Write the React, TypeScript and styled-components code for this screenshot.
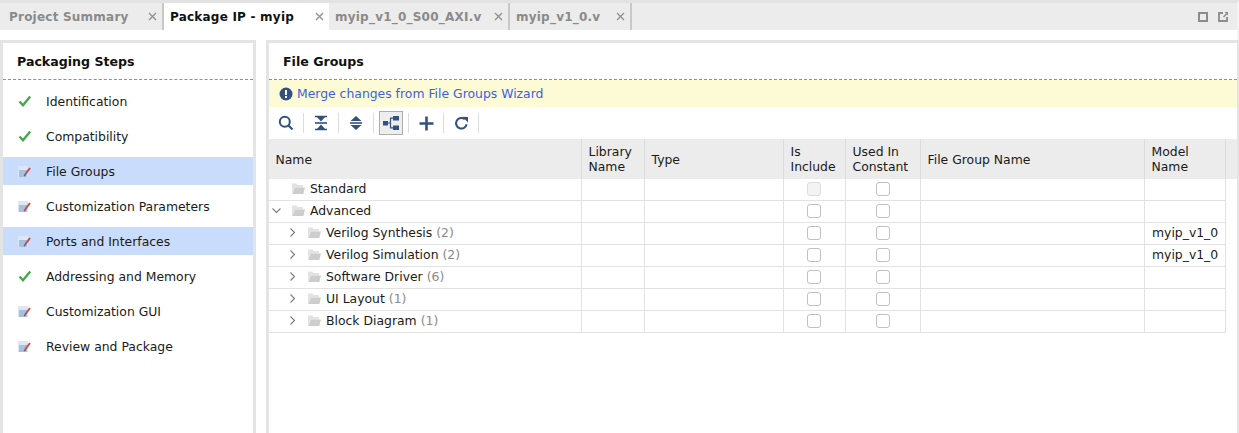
import React from "react";
import styled, { createGlobalStyle } from "styled-components";

const GlobalStyle = createGlobalStyle`
  html, body {
    margin: 0;
    padding: 0;
    background: #fff;
  }
  body {
    font-family: "DejaVu Sans", sans-serif;
    font-size: 12px;
    color: #1a1a1a;
  }
`;

const NAVY = "#33507f";

const tabs = [
  { label: "Project Summary", width: 164, left: 9 },
  { label: "Package IP - myip", width: 165, left: 6, active: true },
  { label: "myip_v1_0_S00_AXI.v", width: 181, left: 6 },
  { label: "myip_v1_0.v", width: 122, left: 6 },
];

const steps = [
  { label: "Identification", done: true },
  { label: "Compatibility", done: true },
  { label: "File Groups", selected: true },
  { label: "Customization Parameters" },
  { label: "Ports and Interfaces", selected: true },
  { label: "Addressing and Memory", done: true },
  { label: "Customization GUI" },
  { label: "Review and Package" },
];

const rows = [
  { name: "Standard", depth: 0, disabled: true },
  { name: "Advanced", depth: 0, open: true, arrow: true },
  { name: "Verilog Synthesis", count: 2, depth: 1, arrow: true, model: "myip_v1_0" },
  { name: "Verilog Simulation", count: 2, depth: 1, arrow: true, model: "myip_v1_0" },
  { name: "Software Driver", count: 6, depth: 1, arrow: true },
  { name: "UI Layout", count: 1, depth: 1, arrow: true },
  { name: "Block Diagram", count: 1, depth: 1, arrow: true },
];

const CloseIcon = () => (
  <svg width="9" height="9" viewBox="0 0 9 9">
    <path d="M1 1l7 7M8 1L1 8" stroke="#8f8f8f" strokeWidth="1.3" />
  </svg>
);

const CheckIcon = () => (
  <svg width="14" height="12" viewBox="0 0 14 12">
    <path d="M1.5 6.5L5 10.2L12.2 1.5" fill="none" stroke="#45a84d" strokeWidth="2.4" />
  </svg>
);

const EditIcon = () => (
  <svg width="13" height="11" viewBox="0 0 13 11">
    <rect x="0" y="0" width="10" height="11" fill="#dde6f3" />
    <rect x="1" y="4" width="8" height="7" fill="#a9bfe2" />
    <path d="M7.5 8L12 2" stroke="#cf4a42" strokeWidth="2" />
    <path d="M6.2 10.2L7.5 8" stroke="#6d5a55" strokeWidth="1.4" />
  </svg>
);

const FolderIcon = () => (
  <svg width="13" height="11" viewBox="0 0 13 11">
    <path d="M0 0.5h4.5l1 1.5H11v2.5H2.5L0 10.5z" fill="#e2e2e2" />
    <path d="M2.8 4.5H13l-1.6 6.5H0.2z" fill="#cdcdcd" />
  </svg>
);

const Chevron = ({ open }: { open?: boolean }) => (
  <svg width="9" height="9" viewBox="0 0 9 9">
    <path
      d={open ? "M0.5 2.5L4.5 6.5L8.5 2.5" : "M2.5 0.5L6.5 4.5L2.5 8.5"}
      fill="none"
      stroke="#7d7d7d"
      strokeWidth="1.1"
    />
  </svg>
);

const App = () => {
  return (
    <Page>
      <GlobalStyle />
      <TabBar>
        {tabs.map((t) => (
          <Tab key={t.label} $width={t.width} $left={t.left} $active={t.active}>
            <span>{t.label}</span>
            <CloseIcon />
          </Tab>
        ))}
        <WindowIcons>
          <svg width="10" height="10" viewBox="0 0 10 10">
            <rect x="1" y="1" width="8" height="8" fill="none" stroke="#8c8c8c" strokeWidth="2" />
          </svg>
          <svg width="10" height="10" viewBox="0 0 10 10">
            <path d="M5 1H1V9H9V5" fill="none" stroke="#8c8c8c" strokeWidth="1.8" />
            <path d="M5.5 5L9 1.5" fill="none" stroke="#8c8c8c" strokeWidth="1.4" />
            <path d="M6.5 0H10V3.5z" fill="#8c8c8c" />
          </svg>
        </WindowIcons>
      </TabBar>
      <Spacer />
      <Panels>
        <LeftPanel>
          <PanelHeader>Packaging Steps</PanelHeader>
          <StepList>
            {steps.map((s) => (
              <Step key={s.label} $selected={s.selected}>
                <StepIcon>{s.done ? <CheckIcon /> : <EditIcon />}</StepIcon>
                {s.label}
              </Step>
            ))}
          </StepList>
        </LeftPanel>
        <RightPanel>
          <PanelHeader>File Groups</PanelHeader>
          <Notice>
            <svg width="14" height="14" viewBox="0 0 14 14">
              <circle cx="7" cy="7" r="6.5" fill={NAVY} />
              <rect x="6" y="3" width="2" height="5" fill="#fff" />
              <rect x="6" y="9" width="2" height="2" fill="#fff" />
            </svg>
            <NoticeLink>Merge changes from File Groups Wizard</NoticeLink>
          </Notice>
          <Toolbar>
            <ToolButton>
              <svg width="16" height="16" viewBox="0 0 16 16">
                <circle cx="6.8" cy="6.8" r="5" fill="none" stroke={NAVY} strokeWidth="2" />
                <path d="M10.5 10.5L14.5 14.5" stroke={NAVY} strokeWidth="2.2" />
              </svg>
            </ToolButton>
            <ToolDivider />
            <ToolButton>
              <svg width="14" height="16" viewBox="0 0 14 16">
                <path d="M2 1h10L7 6.5z M2 15h10L7 9.5z" fill={NAVY} />
                <path d="M1 8h12" stroke={NAVY} strokeWidth="1.6" />
                <path d="M1 1.5h12M1 14.5h12" stroke={NAVY} strokeWidth="1.4" />
              </svg>
            </ToolButton>
            <ToolDivider />
            <ToolButton>
              <svg width="14" height="16" viewBox="0 0 14 16">
                <path d="M7 1L12.5 6H1.5z M7 15L1.5 10H12.5z" fill={NAVY} />
                <path d="M1 8h12" stroke={NAVY} strokeWidth="1.6" />
              </svg>
            </ToolButton>
            <ToolDivider />
            <ToolButton $pressed>
              <svg width="16" height="14" viewBox="0 0 16 14">
                <rect x="0" y="5" width="5" height="4.5" fill={NAVY} />
                <rect x="10" y="0" width="6" height="4.5" fill={NAVY} />
                <rect x="10" y="9.5" width="6" height="4.5" fill={NAVY} />
                <path d="M5 7h3M7.5 2.2V11.8M7 2.2h3M7 11.8h3" stroke={NAVY} strokeWidth="1.2" fill="none" />
              </svg>
            </ToolButton>
            <ToolDivider />
            <ToolButton>
              <svg width="15" height="15" viewBox="0 0 15 15">
                <path d="M7.5 0.5v14M0.5 7.5h14" stroke={NAVY} strokeWidth="2.6" />
              </svg>
            </ToolButton>
            <ToolDivider />
            <ToolButton>
              <svg width="15" height="15" viewBox="0 0 15 15">
                <path d="M12.6 8.2A5.3 5.3 0 1 1 10.8 3.2" fill="none" stroke={NAVY} strokeWidth="2" />
                <path d="M8.5 0.8L14 1V6.5z" fill={NAVY} />
              </svg>
            </ToolButton>
            <ToolDivider />
          </Toolbar>
          <Table>
            <HeaderRow>
              <HeadCell>Name</HeadCell>
              <HeadCell>Library<br />Name</HeadCell>
              <HeadCell>Type</HeadCell>
              <HeadCell>Is<br />Include</HeadCell>
              <HeadCell>Used In<br />Constant</HeadCell>
              <HeadCell>File Group Name</HeadCell>
              <HeadCell>Model<br />Name</HeadCell>
              <div />
            </HeaderRow>
            {rows.map((r) => (
              <BodyRow key={r.name}>
                <NameCell $depth={r.depth}>
                  <Arrow>{r.arrow && <Chevron open={r.open} />}</Arrow>
                  <FolderIcon />
                  <span>{r.name}</span>
                  {r.count !== undefined && <Count>({r.count})</Count>}
                </NameCell>
                <Cell />
                <Cell />
                <CheckCell $nudge><Box $disabled={r.disabled} /></CheckCell>
                <CheckCell><Box /></CheckCell>
                <Cell />
                <Cell>{r.model}</Cell>
              </BodyRow>
            ))}
          </Table>
        </RightPanel>
      </Panels>
    </Page>
  );
};

const Page = styled.div`
  width: 1239px;
  height: 433px;
  overflow: hidden;
  display: flex;
  flex-direction: column;
  background: #fff;
`;

const TabBar = styled.div`
  height: 27px;
  display: flex;
  align-items: stretch;
  background: #ececec;
  border-top: 3px solid #e2e2e2;
  border-right: 2px solid #f3f3f3;
`;

const Tab = styled.div<{ $width: number; $left: number; $active?: boolean }>`
  width: ${(p) => p.$width}px;
  box-sizing: border-box;
  padding: 0 5px 0 ${(p) => p.$left}px;
  display: flex;
  align-items: center;
  justify-content: space-between;
  font-size: 12px;
  letter-spacing: 0.22px;
  font-weight: bold;
  color: ${(p) => (p.$active ? "#111" : "#8a8a8a")};
  background: ${(p) => (p.$active ? "#fff" : "transparent")};
  border-right: ${(p) => (p.$active ? "0" : "2px solid #c8c8c8")};
`;

const WindowIcons = styled.div`
  margin-left: auto;
  display: flex;
  align-items: center;
  gap: 10px;
  padding-right: 9px;
`;

const Spacer = styled.div`
  height: 10px;
  border-right: 2px solid #f3f3f3;
`;

const Panels = styled.div`
  flex: 1;
  display: flex;
  gap: 10px;
  min-height: 0;
`;

const LeftPanel = styled.div`
  width: 250px;
  flex-shrink: 0;
  border: solid #e4e4e4;
  border-width: 3px 3px 0 3px;
`;

const RightPanel = styled.div`
  flex: 1;
  min-width: 0;
  border: solid #e4e4e4;
  border-width: 3px 2px 0 3px;
`;

const PanelHeader = styled.div`
  height: 37px;
  box-sizing: border-box;
  border-bottom: 1px dashed #8f8f8f;
  padding: 0 0 0 14px;
  display: flex;
  align-items: center;
  font-size: 12.6px;
  font-weight: bold;
  color: #111;
`;

const StepList = styled.div`
  display: flex;
  flex-direction: column;
  gap: 7px;
  padding-top: 7px;
`;

const Step = styled.div<{ $selected?: boolean }>`
  height: 28px;
  display: flex;
  align-items: center;
  padding-left: 15px;
  background: ${(p) => (p.$selected ? "#c9dcfb" : "transparent")};
  font-size: 12.4px;
`;

const StepIcon = styled.span`
  width: 28px;
  display: flex;
  align-items: center;
`;

const Notice = styled.div`
  height: 27px;
  padding-left: 10px;
  display: flex;
  align-items: center;
  gap: 4px;
  background: #fdfbd6;
`;

const NoticeLink = styled.span`
  color: #3d5fe0;
  font-size: 12.4px;
`;

const Toolbar = styled.div`
  height: 32px;
  display: flex;
  align-items: center;
  padding-left: 5px;
`;

const ToolButton = styled.div<{ $pressed?: boolean }>`
  width: 24px;
  height: 24px;
  box-sizing: border-box;
  display: flex;
  align-items: center;
  justify-content: center;
  background: ${(p) => (p.$pressed ? "#eeeeee" : "transparent")};
  border: ${(p) => (p.$pressed ? "1px solid #adadad" : "0")};
`;

const ToolDivider = styled.div`
  width: 1px;
  height: 20px;
  background: #dcdcdc;
  margin: 0 5px;
`;

const Table = styled.div`
  display: flex;
  flex-direction: column;
`;

const HeaderRow = styled.div`
  display: grid;
  grid-template-columns: 313px 63px 139px 62px 75px 224px 81px 11px;
  height: 40px;
  background: #ececec;
`;

const HeadCell = styled.div`
  box-sizing: border-box;
  padding-left: 6.5px;
  border-right: 1px solid #dcdcdc;
  font-size: 12.4px;
  line-height: 15px;
  align-self: stretch;
  display: flex;
  align-items: center;
`;

const BodyRow = styled.div`
  display: grid;
  grid-template-columns: 313px 63px 139px 62px 75px 224px 81px;
  height: 22px;
`;

const Cell = styled.div`
  box-sizing: border-box;
  border-right: 1px solid #e2e2e2;
  border-bottom: 1px solid #e2e2e2;
  padding: 0 0 2px 7px;
  display: flex;
  align-items: center;
  font-size: 12.4px;
`;

const NameCell = styled(Cell)<{ $depth: number }>`
  padding-left: ${(p) => 1 + p.$depth * 16}px;
  gap: 5px;
`;

const Arrow = styled.span`
  width: 12px;
  display: flex;
  align-items: center;
  justify-content: center;
  margin-right: 5px;
`;

const Count = styled.span`
  color: #8a8a8a;
  margin-left: -1px;
`;

const CheckCell = styled(Cell)<{ $nudge?: boolean }>`
  padding: 0 ${(p) => (p.$nudge ? 2 : 0)}px 2px 0;
  justify-content: center;
`;

const Box = styled.span<{ $disabled?: boolean }>`
  width: 14px;
  height: 14px;
  box-sizing: border-box;
  border-radius: 3px;
  border: 1px solid ${(p) => (p.$disabled ? "#dddddd" : "#c0c0c0")};
  background: ${(p) => (p.$disabled ? "#f3f3f3" : "#fff")};
`;

export default App;
